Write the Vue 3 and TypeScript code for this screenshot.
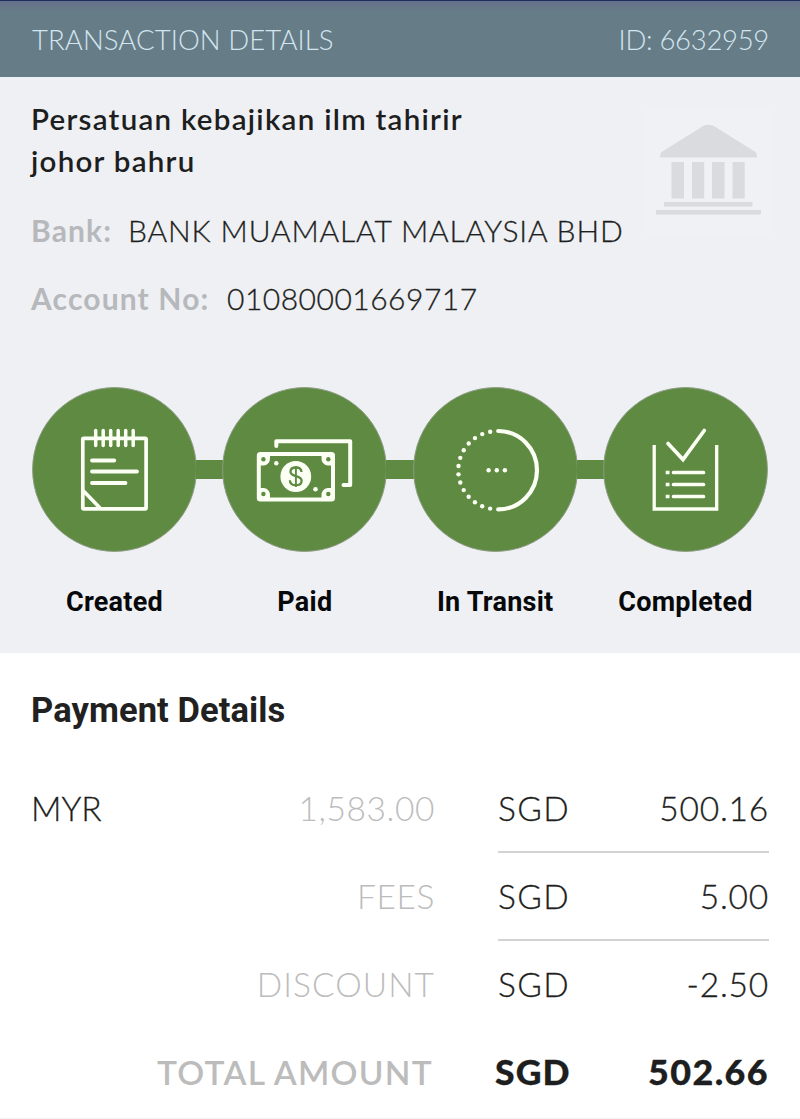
<script setup lang="ts">
interface Step {
  key: string
  label: string
}

interface PaymentRow {
  key: string
  lead: string
  label: string
  currency: string
  amount: string
}

const steps: Step[] = [
  { key: 'created', label: 'Created' },
  { key: 'paid', label: 'Paid' },
  { key: 'transit', label: 'In Transit' },
  { key: 'completed', label: 'Completed' },
]

const rows: PaymentRow[] = [
  { key: 'principal', lead: 'MYR', label: '1,583.00', currency: 'SGD', amount: '500.16' },
  { key: 'fees', lead: '', label: 'FEES', currency: 'SGD', amount: '5.00' },
  { key: 'discount', lead: '', label: 'DISCOUNT', currency: 'SGD', amount: '-2.50' },
  { key: 'total', lead: '', label: 'TOTAL AMOUNT', currency: 'SGD', amount: '502.66' },
]

// Dots along the left half of the progress ring, top to bottom.
const ringDots = Array.from({ length: 14 }, (_, i) => {
  const angle = ((-100 - i * 12.3) * Math.PI) / 180
  return { x: 83.9 + 38.6 * Math.cos(angle), y: 83.2 + 39 * Math.sin(angle) }
})

const coils = [63.7, 71.2, 78.7, 86.2, 93.7, 101.2]
</script>

<template>
  <main class="page">
    <header class="bar">
      <span class="bar-title">TRANSACTION DETAILS</span>
      <span class="bar-id">ID: 6632959</span>
    </header>

    <section class="summary">
      <div class="recipient">
        <div class="info">
          <h1 class="name">Persatuan kebajikan ilm tahirir<br />johor bahru</h1>
          <div class="field">
            <span class="key key-bank">Bank:</span><span class="value value-bank">BANK MUAMALAT MALAYSIA BHD</span>
          </div>
          <div class="field">
            <span class="key key-acc">Account No:</span><span class="value value-acc">01080001669717</span>
          </div>
        </div>
        <svg class="bank-icon" viewBox="0 0 126 126" width="126" height="126">
          <rect width="126" height="126" fill="#f0f1f4" />
          <g fill="#dadbde">
            <path d="M59 17.5Q63.500 15.800 68 17.500L110.500 44Q112 45 112 49.500H15Q15 45 16.500 44Z" />
            <rect x="26.500" y="54" width="12.500" height="36.500" />
            <rect x="47" y="54" width="12.200" height="36.500" />
            <rect x="67" y="54" width="12.500" height="36.500" />
            <rect x="87.500" y="54" width="12.200" height="36.500" />
            <rect x="19" y="94" width="88.500" height="4.500" />
            <rect x="11" y="102" width="105" height="4.500" />
          </g>
        </svg>
      </div>

      <div class="steps">
        <template v-for="(step, index) in steps" :key="step.key">
          <div v-if="index > 0" class="link"></div>
          <div class="step">
            <svg class="disc" viewBox="0 0 165 165" width="165" height="165">
              <circle cx="82.500" cy="82.500" r="81.900" fill="#5f8a41" stroke="#8d9c84" stroke-width="1" />

              <g v-if="step.key === 'created'" fill="none" stroke="#fbfff4" stroke-width="3.700" stroke-linecap="round" stroke-linejoin="round">
                <rect x="50.800" y="51.300" width="63.300" height="70.500" rx="1" />
                <path v-for="x in coils" :key="x" :d="`M${x} 43.500V58.500`" stroke-width="3.500" />
                <path d="M60 73.500H82.300M60 84.500H105M60 96H93.500" stroke-width="3.800" />
                <path d="M52 104.500L67.500 120.500" />
              </g>

              <g v-else-if="step.key === 'paid'">
                <g fill="none" stroke="#fbfff4" stroke-width="4" stroke-linecap="round" stroke-linejoin="round">
                  <path d="M54.300 59V54.200H128.200V98H121.500" />
                  <rect x="36.800" y="67" width="74.200" height="45.500" rx="1.500" />
                </g>
                <g fill="#fbfff4">
                  <path d="M36.500 67H48V71A7 7 0 0 1 42 78.500H36.500ZM111 67H99.500V71A7 7 0 0 0 105.500 78.500H111ZM36.500 112.500H48V108.500A7 7 0 0 0 42 101H36.500ZM111 112.500H99.500V108.500A7 7 0 0 1 105.500 101H111Z" />
                  <circle cx="73.800" cy="89.500" r="15.400" />
                  <circle cx="54.300" cy="76.300" r="2.200" />
                  <circle cx="93.500" cy="102.300" r="2.300" />
                </g>
                <g fill="#5f8a41">
                  <circle cx="41.400" cy="72.200" r="2.200" />
                  <circle cx="106.300" cy="72.200" r="2.200" />
                  <circle cx="41.400" cy="107" r="2.200" />
                  <circle cx="106.300" cy="107" r="2.200" />
                </g>
                <g fill="none" stroke="#5f8a41" stroke-width="2.300">
                  <path d="M79.500 85C79.300 81.500 76.800 80.500 74 80.500C70.500 80.500 68.500 82.200 68.500 84.700C68.500 90.500 79.600 87.700 79.600 93.700C79.600 96.700 77.200 98.200 74 98.200C70.500 98.200 68 96.500 67.900 93.200" />
                  <path d="M73.900 79V100" stroke-width="1.900" />
                </g>
              </g>

              <g v-else-if="step.key === 'transit'" fill="#fbfff4">
                <path d="M85.200 44A38.800 39.200 0 0 1 85.200 122.400" fill="none" stroke="#fbfff4" stroke-width="4.200" stroke-linecap="round" />
                <circle v-for="(dot, d) in ringDots" :key="d" :cx="dot.x" :cy="dot.y" r="2.200" />
                <circle cx="75.600" cy="83.200" r="2.200" />
                <circle cx="83.800" cy="83.200" r="2.200" />
                <circle cx="91.900" cy="83.200" r="2.200" />
              </g>

              <g v-else fill="none" stroke="#fbfff4">
                <path d="M51.200 58V122H113.700V58" stroke-width="3.300" />
                <path d="M65 56.500L80 72.500L101.300 43.500" stroke-width="3.700" stroke-linecap="round" />
                <path d="M70.500 85.500H100.500M70.500 97.500H100.500M70.500 109.500H100.500" stroke-width="3.700" stroke-linecap="round" />
                <path d="M62.700 85.500H66.500M62.700 97.500H66.500M62.700 109.500H66.500" stroke-width="3.700" />
              </g>
            </svg>
            <span class="step-label">{{ step.label }}</span>
          </div>
        </template>
      </div>
    </section>

    <section class="payment">
      <h2 class="payment-title">Payment Details</h2>
      <div v-for="row in rows" :key="row.key" class="row" :class="row.key">
        <span class="lead">{{ row.lead }}</span>
        <span class="label">{{ row.label }}</span>
        <div class="sum">
          <span class="currency">{{ row.currency }}</span>
          <span class="amount">{{ row.amount }}</span>
        </div>
      </div>
    </section>
  </main>
</template>

<style>
body {
  margin: 0;
  background: #fff;
}
</style>

<style scoped>
.page {
  box-sizing: border-box;
  width: 800px;
  height: 1119px;
  overflow: hidden;
  background: #fff;
  border-bottom: 1px solid #f3f3f3;
  color: #1d1e20;
  font-family: Lato, "Liberation Sans", sans-serif;
  white-space: nowrap;
}
.bar {
  box-sizing: border-box;
  height: 77px;
  padding: 1px 31px 0 32px;
  display: flex;
  align-items: center;
  justify-content: space-between;
  background: linear-gradient(#66708a 1px, #667c87 10px);
  border-top: 1px solid #1e2d5c;
  color: #d3e5ef;
  font-size: 27.5px;
  font-weight: 300;
}
.bar-title {
  letter-spacing: 0.1px;
}
.bar-id {
  letter-spacing: -0.3px;
}
.summary {
  box-sizing: border-box;
  height: 576px;
  padding: 20.5px 32px 0;
  background: #eff0f4;
}
.recipient {
  display: flex;
  justify-content: space-between;
  height: 289.5px;
}
.info {
  width: 600px;
  margin-left: -1px;
}
.name {
  margin: 0 0 13.5px;
  font-size: 29.5px;
  line-height: 42.5px;
  font-weight: 600;
  letter-spacing: 1.27px;
}
.field {
  height: 68px;
  display: flex;
  align-items: center;
  font-size: 30px;
}
.key {
  color: #b6b8bb;
  font-weight: 700;
  letter-spacing: 1.15px;
}
.key-bank {
  width: 97px;
}
.key-acc {
  width: 196px;
}
.value {
  font-weight: 300;
  -webkit-text-stroke: 0.3px currentColor;
}
.value-bank {
  letter-spacing: 0.87px;
}
.value-acc {
  letter-spacing: 0.5px;
}
.bank-icon {
  margin: 10.5px -3px 0 0;
}
.steps {
  display: flex;
}
.step {
  width: 165px;
  flex: none;
  display: flex;
  flex-direction: column;
  align-items: center;
}
.disc {
  display: block;
}
.link {
  flex: 1;
  height: 19px;
  margin: 73px -1px 0;
  background: #5f8a41;
}
.step-label {
  margin-top: 34px;
  color: #07080a;
  font-family: Roboto, sans-serif;
  font-size: 27px;
  line-height: 32px;
  font-weight: 700;
  letter-spacing: 0.25px;
}
.payment {
  padding: 0 31px;
}
.payment-title {
  margin: 0;
  padding: 37px 0 35px;
  font-family: Roboto, sans-serif;
  font-size: 34.5px;
  line-height: 40px;
  font-weight: 700;
  letter-spacing: 0.1px;
  color: #212121;
}
.row {
  display: flex;
  height: 88px;
  font-size: 33.5px;
  font-weight: 300;
}
.lead {
  width: 101px;
  line-height: 86px;
  -webkit-text-stroke: 0.3px currentColor;
}
.label {
  width: 303px;
  margin-right: 63px;
  line-height: 86px;
  text-align: right;
  color: #bcbcbc;
  letter-spacing: 0.6px;
}
.discount .label {
  letter-spacing: 1.05px;
}
.sum {
  box-sizing: border-box;
  flex: 1;
  display: flex;
  justify-content: space-between;
  line-height: 86px;
  border-bottom: 2px solid #d3d3d3;
  letter-spacing: 0.8px;
  -webkit-text-stroke: 0.3px currentColor;
}
.currency {
  letter-spacing: 1.3px;
}
.discount .sum,
.total .sum {
  border-color: transparent;
}
.total .label {
  box-sizing: border-box;
  padding-right: 2px;
  font-weight: 600;
  letter-spacing: 1.25px;
}
.total .sum {
  font-weight: 900;
}
.total .currency {
  margin-left: -3px;
  letter-spacing: 1px;
  transform: scaleX(1.06);
  transform-origin: left;
}
.total .amount {
  letter-spacing: 1.3px;
  transform: scaleX(1.07);
  transform-origin: right;
}
</style>
